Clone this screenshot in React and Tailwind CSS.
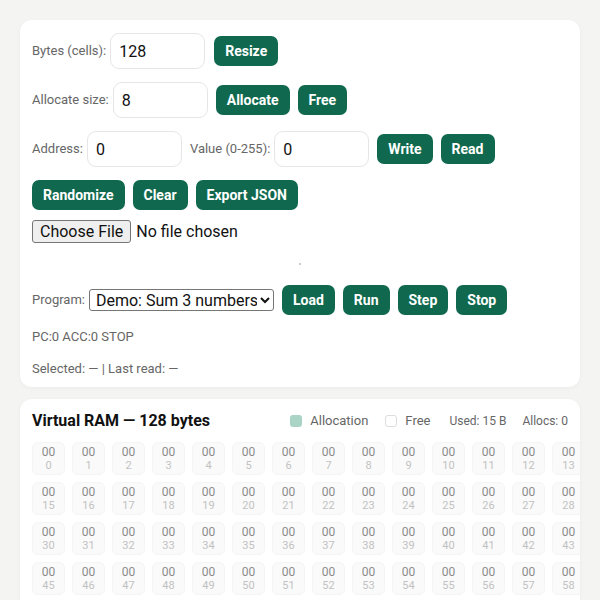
import { useState } from 'react'

const btn = "bg-[#10694e] text-white font-bold text-[14px] leading-[18px] px-[11px] py-[6px] rounded-[7px]"
const field = "w-[95px] h-[36px] border border-[#e6e6e6] rounded-[9px] px-2 text-[16px] text-[#111] outline-none"
const label = "text-[13px] text-[#666]"

export default function App() {
  const [bytes, setBytes] = useState('128')
  const [allocSize, setAllocSize] = useState('8')
  const [addr, setAddr] = useState('0')
  const [val, setVal] = useState('0')

  const cells = Array.from({ length: 128 }, (_, i) => i)

  return (
    <div className="min-h-screen bg-[#f4f4f2] p-5 flex flex-col gap-[12px]" style={{ fontFamily: 'Roboto, "Liberation Sans", sans-serif' }}>
      <div className="bg-white rounded-[12px] shadow-[0_1px_4px_rgba(0,0,0,0.04)] px-3 pt-[13px] pb-[9px]">
        <div className="flex items-center gap-[9px]">
          <div className="flex items-center gap-1">
            <span className={label}>Bytes (cells):</span>
            <input className={field} value={bytes} onChange={e => setBytes(e.target.value)} />
          </div>
          <button className={btn}>Resize</button>
        </div>

        <div className="flex items-center gap-2 mt-[13px]">
          <div className="flex items-center gap-1">
            <span className={label}>Allocate size:</span>
            <input className={field} value={allocSize} onChange={e => setAllocSize(e.target.value)} />
          </div>
          <button className={btn}>Allocate</button>
          <button className={btn}>Free</button>
        </div>

        <div className="flex items-center gap-2 mt-[13px]">
          <div className="flex items-center gap-1">
            <span className={label}>Address:</span>
            <input className={field} value={addr} onChange={e => setAddr(e.target.value)} />
          </div>
          <div className="flex items-center gap-1">
            <span className={label}>Value (0-255):</span>
            <input className={field} value={val} onChange={e => setVal(e.target.value)} />
          </div>
          <button className={btn}>Write</button>
          <button className={btn}>Read</button>
        </div>

        <div className="flex items-center gap-2 mt-[13px]">
          <button className={btn}>Randomize</button>
          <button className={btn}>Clear</button>
          <button className={btn}>Export JSON</button>
        </div>

        <div className="mt-[10px] text-[16px] leading-[23px]">
          <input
            type="file"
            className="text-[16px] text-[#111] file:text-[16px] file:leading-[21px] file:text-[#111] file:bg-[#efefef] file:border file:border-[#767676] file:rounded-[3px] file:px-[7px] file:py-0 file:mr-[5px]"
          />
        </div>

        <div className="flex justify-center pt-[20px] pb-[20px]">
          <div className="w-[2px] h-[2px] rounded-full bg-[#bbb]"></div>
        </div>

        <div className="flex items-center gap-2">
          <div className="flex items-center gap-1">
            <span className={label}>Program:</span>
            <select className="w-[185px] text-[16px] text-[#111] border border-[#767676] rounded-[3px] h-[22px] pl-[2px]">
              <option>Demo: Sum 3 numbers</option>
            </select>
          </div>
          <button className={btn}>Load</button>
          <button className={btn}>Run</button>
          <button className={btn}>Step</button>
          <button className={btn}>Stop</button>
        </div>

        <div className={label + " mt-[12px]"}>PC:0 ACC:0 STOP</div>
        <div className={label + " mt-[12px]"}>Selected: — | Last read: —</div>
      </div>

      <div className="bg-white rounded-[12px] shadow-[0_1px_4px_rgba(0,0,0,0.04)] px-3 pt-[10px] overflow-hidden">
        <div className="flex items-center justify-between">
          <h2 className="text-[16px] font-bold text-[#111]">Virtual RAM — 128 bytes</h2>
          <div className="flex items-center text-[13px] text-[#666]">
            <div className="flex items-center gap-2">
              <span className="w-[12px] h-[12px] rounded-[3px] bg-[#a9d4c6]"></span>
              <span>Allocation</span>
            </div>
            <div className="flex items-center gap-2 ml-[17px]">
              <span className="w-[12px] h-[12px] rounded-[3px] border border-[#ddd] bg-white"></span>
              <span>Free</span>
            </div>
            <span className="ml-[19px] text-[12px]">Used: 15 B</span>
            <span className="ml-[16px] text-[12px]">Allocs: 0</span>
          </div>
        </div>

        <div className="grid grid-cols-[repeat(15,33px)] gap-[7px] mt-[9px] pb-3">
          {cells.map(i => (
            <div key={i} className="w-[33px] h-[33px] rounded-[6px] bg-[#fafafa] border border-[#f4f4f4] flex flex-col items-center justify-center leading-none">
              <span className="text-[12px] text-[#8c8c8c]">00</span>
              <span className="text-[11px] text-[#c2c2c2] mt-[2px]">{i}</span>
            </div>
          ))}
        </div>
      </div>
    </div>
  )
}
